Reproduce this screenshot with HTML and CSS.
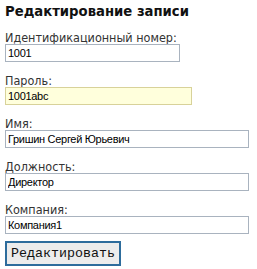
FILE: index.html
```html
<!DOCTYPE html>
<html lang="ru">
<head>
    <meta charset="UTF-8">
    <title>Редактирование записи</title>
    <link rel="stylesheet" href="styles.css">
</head>
<body>
    <div class="form">
        <h1>Редактирование записи</h1>

        <div class="field">
            <label for="id">Идентификационный номер:</label>
            <input type="text" id="id" class="w-id" value="1001">
        </div>

        <div class="field">
            <label for="pass">Пароль:</label>
            <input type="text" id="pass" class="w-pass filled" value="1001abc">
        </div>

        <div class="field">
            <label for="name">Имя:</label>
            <input type="text" id="name" class="w-full" value="Гришин Сергей Юрьевич">
        </div>

        <div class="field">
            <label for="post">Должность:</label>
            <input type="text" id="post" class="w-full" value="Директор">
        </div>

        <div class="field">
            <label for="company">Компания:</label>
            <input type="text" id="company" class="w-full" value="Компания1">
        </div>

        <button type="submit">Редактировать</button>
    </div>
</body>
</html>
```

FILE: styles.css
```css
body {
    margin: 0;
    padding: 0 5px;
    background: #fff;
    font-family: "DejaVu Sans Condensed", "DejaVu Sans", Verdana, sans-serif;
    font-stretch: condensed;
    color: #222;
}
.form {
    display: flex;
    flex-direction: column;
    align-items: flex-start;
}
h1 {
    margin: 2px 0 0;
    font-size: 14.7px;
    line-height: 17px;
    font-weight: bold;
    color: #111;
}
.field {
    display: flex;
    flex-direction: column;
    margin-top: 12px;
}
label {
    font-size: 12.5px;
    line-height: 13px;
    color: #333;
}
input {
    box-sizing: border-box;
    height: 18px;
    margin: 0;
    padding: 0 2px;
    border: 1px solid #a9b3bf;
    background: #fff;
    font-family: "Liberation Sans", Arial, sans-serif;
    font-stretch: normal;
    font-size: 11px;
    letter-spacing: -0.3px;
    color: #000;
}
.filled {
    background: #ffffdc;
    border-color: #d8d29a;
}
.w-id {
    width: 175px;
}
.w-pass {
    width: 187px;
}
.w-full {
    width: 244px;
}
button {
    margin-top: 7px;
    padding: 2px 4px;
    height: 25px;
    border: 2px solid #2d6c9c;
    background: #ececec;
    font-family: "Courier New", "Nimbus Mono PS", FreeMono, "Liberation Mono", monospace;
    font-stretch: normal;
    font-size: 13.33px;
    color: #111;
}
```
